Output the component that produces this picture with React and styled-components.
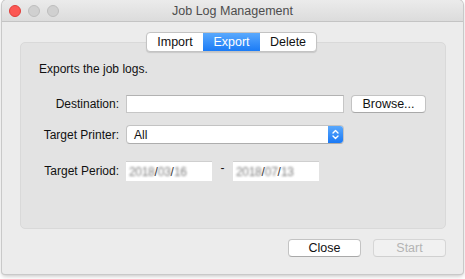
import React from "react";
import styled, { createGlobalStyle } from "styled-components";

const GlobalStyle = createGlobalStyle`
  html, body {
    margin: 0;
    padding: 0;
    background: #ffffff;
    font-family: "Liberation Sans", Arial, sans-serif;
    font-size: 12px;
    color: #111;
  }
`;

const Page = styled.div`
  padding: 0 2px;
  height: 279px;
  box-sizing: border-box;
`;

const Window = styled.div`
  width: 461px;
  height: 274px;
  background: #ececec;
  border-radius: 5px 5px 3px 3px;
  box-shadow: 0 0 0 1px #c9c9c9, 0 2px 4px rgba(0, 0, 0, 0.25);
  display: flex;
  flex-direction: column;
  overflow: hidden;
`;

const TitleBar = styled.div`
  height: 22px;
  flex: none;
  display: flex;
  align-items: center;
  position: relative;
  background: linear-gradient(#ebebeb, #dcdcdc);
  border-bottom: 1px solid #c4c4c4;
  box-sizing: border-box;
`;

const Lights = styled.div`
  display: flex;
  gap: 7px;
  padding-left: 7px;
`;

const Light = styled.span`
  width: 12px;
  height: 12px;
  border-radius: 50%;
  box-sizing: border-box;
  background: ${(p) => (p.$red ? "#fc5753" : "#d0d0d0")};
  border: 1px solid ${(p) => (p.$red ? "#de3e3a" : "#bdbdbd")};
`;

const Title = styled.div`
  position: absolute;
  left: 0;
  right: 0;
  text-align: center;
  font-size: 12.5px;
  color: #4d4d4d;
  pointer-events: none;
`;

const Body = styled.div`
  flex: 1;
  padding: 10px 17px 0 18px;
  display: flex;
  flex-direction: column;
`;

const Tabs = styled.div`
  align-self: center;
  margin-left: -3px;
  display: flex;
  height: 18px;
  background: #fff;
  border: 1px solid #c3c3c3;
  border-radius: 4px;
  box-shadow: 0 1px 1px rgba(0, 0, 0, 0.12);
  position: relative;
  z-index: 1;
  overflow: hidden;
`;

const Tab = styled.div`
  width: ${(p) => p.$w}px;
  display: flex;
  align-items: center;
  justify-content: center;
  font-size: 12.5px;
  color: ${(p) => (p.$active ? "#fff" : "#111")};
  background: ${(p) =>
    p.$active ? "linear-gradient(#5aa9fd, #1b7bf6)" : "transparent"};
`;

const Group = styled.div`
  margin-top: -10px;
  height: 187px;
  box-sizing: border-box;
  background: #e3e3e3;
  border: 1px solid #d9d9d9;
  border-radius: 5px;
  padding: 18px 0 0 18px;
`;

const Intro = styled.div`
  line-height: 16px;
`;

const Form = styled.div`
  margin-top: 18px;
  display: grid;
  grid-template-columns: 80px 218px auto;
  column-gap: 7px;
  row-gap: 12px;
  align-items: center;
`;

const Label = styled.div`
  text-align: right;
  white-space: nowrap;
  margin-top: ${(p) => p.$top || 0}px;
`;

const TextField = styled.div`
  height: 18px;
  background: #fff;
  border: 1px solid #c6c6c6;
  border-top-color: #b2b2b2;
  box-sizing: border-box;
`;

const PushButton = styled.div`
  width: ${(p) => p.$w}px;
  height: 18px;
  box-sizing: border-box;
  display: flex;
  align-items: center;
  justify-content: center;
  background: ${(p) => (p.$disabled ? "#f1f1f1" : "#fff")};
  color: ${(p) => (p.$disabled ? "#b4b4b4" : "#111")};
  border: 1px solid ${(p) => (p.$disabled ? "#d6d6d6" : "#c3c3c3")};
  border-bottom-color: ${(p) => (p.$disabled ? "#d0d0d0" : "#a9a9a9")};
  border-radius: 4px;
  font-size: 12.5px;
`;

const Popup = styled.div`
  height: 19px;
  display: flex;
  background: #fff;
  border: 1px solid #c3c3c3;
  border-bottom-color: #adadad;
  border-radius: 4px;
  box-sizing: border-box;
  overflow: hidden;
`;

const PopupText = styled.div`
  flex: 1;
  padding-left: 7px;
  display: flex;
  align-items: center;
`;

const PopupArrows = styled.div`
  width: 15px;
  display: flex;
  align-items: center;
  justify-content: center;
  background: linear-gradient(#59a8fd, #1a79f5);
`;

const DateRow = styled.div`
  grid-column: 2 / 4;
  display: flex;
  align-items: center;
  margin-top: 5px;
`;

const DateField = styled.div`
  width: 86px;
  height: 20px;
  box-sizing: border-box;
  background: #fff;
  border-top: 1px solid #cfcfcf;
  display: flex;
  align-items: center;
  padding-left: 3px;
  color: #333;
`;

const Blur = styled.span`
  filter: blur(1.3px);
  color: #808080;
  letter-spacing: -0.3px;
`;

const Dash = styled.span`
  width: 21px;
  text-align: center;
  margin-top: -6px;
`;

const Footer = styled.div`
  display: flex;
  justify-content: flex-end;
  gap: 12px;
  padding-top: 10px;
`;

const DateValue = ({ y, m, d }) => (
  <DateField>
    <Blur>{y}</Blur>/<Blur>{m}</Blur>/<Blur>{d}</Blur>
  </DateField>
);

export default function App() {
  return (
    <>
      <GlobalStyle />
      <Page>
        <Window>
          <TitleBar>
            <Lights>
              <Light $red />
              <Light />
              <Light />
            </Lights>
            <Title>Job Log Management</Title>
          </TitleBar>
          <Body>
            <Tabs>
              <Tab $w={56}>Import</Tab>
              <Tab $w={57} $active>
                Export
              </Tab>
              <Tab $w={56}>Delete</Tab>
            </Tabs>
            <Group>
              <Intro>Exports the job logs.</Intro>
              <Form>
                <Label>Destination:</Label>
                <TextField />
                <PushButton $w={75}>Browse...</PushButton>
                <Label>Target Printer:</Label>
                <Popup>
                  <PopupText>All</PopupText>
                  <PopupArrows>
                    <svg width="7" height="11" viewBox="0 0 7 11">
                      <path
                        d="M1 4 L3.5 1.5 L6 4 M1 7 L3.5 9.5 L6 7"
                        fill="none"
                        stroke="#fff"
                        strokeWidth="1.4"
                        strokeLinecap="round"
                        strokeLinejoin="round"
                      />
                    </svg>
                  </PopupArrows>
                </Popup>
                <span />
                <Label $top={5}>Target Period:</Label>
                <DateRow>
                  <DateValue y="2018" m="03" d="16" />
                  <Dash>-</Dash>
                  <DateValue y="2018" m="07" d="13" />
                </DateRow>
              </Form>
            </Group>
            <Footer>
              <PushButton $w={73}>Close</PushButton>
              <PushButton $w={73} $disabled>
                Start
              </PushButton>
            </Footer>
          </Body>
        </Window>
      </Page>
    </>
  );
}
